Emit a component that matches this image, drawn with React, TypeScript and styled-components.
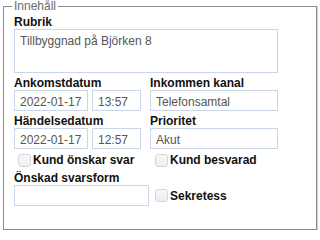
import React from 'react'
import styled, { createGlobalStyle } from 'styled-components'

const GlobalStyle = createGlobalStyle`
  html, body {
    margin: 0;
    padding: 0;
    background: #ffffff;
  }

  body {
    font-family: 'Liberation Sans', Arial, sans-serif;
  }
`

const Panel = styled.fieldset`
  margin: 0 3px;
  padding: 2px 9px 23px 10px;
  border: 1px solid #8c8c8c;
  box-shadow: 1px 1px 0 #cfcfcf;
  min-width: 0;
`

const Legend = styled.legend`
  margin-left: -2px;
  padding: 0 2px;
  font-size: 12px;
  line-height: 13px;
  color: #6b6b6b;
`

const Grid = styled.div`
  display: grid;
  grid-template-columns: 136px 128px;
  row-gap: 3px;
`

const Field = styled.div<{ $span?: boolean }>`
  display: flex;
  flex-direction: column;
  grid-column: ${(p) => (p.$span ? '1 / span 2' : 'auto')};
`

const Label = styled.label`
  display: block;
  font-size: 12px;
  font-weight: bold;
  line-height: 14px;
  color: #111111;
`

const InputRow = styled.div`
  display: flex;
  gap: 4px;
`

const TextBox = styled.input<{ $width: number }>`
  box-sizing: border-box;
  width: ${(p) => p.$width}px;
  height: 21px;
  margin: 0;
  padding: 3px 5px 0;
  border: 1px solid #c9d6ea;
  border-radius: 0;
  outline: none;
  font-family: 'Liberation Sans', Arial, sans-serif;
  font-size: 12px;
  color: #555555;
  background: #ffffff;
`

const TextArea = styled.textarea`
  box-sizing: border-box;
  width: 264px;
  height: 44px;
  margin: 0;
  padding: 4px 5px;
  border: 1px solid #c9d6ea;
  outline: none;
  resize: none;
  font-family: 'Liberation Sans', Arial, sans-serif;
  font-size: 12px;
  line-height: 14px;
  color: #555555;
`

const CheckRow = styled.label<{ $indent: number; $tall?: boolean }>`
  display: flex;
  align-items: center;
  gap: 2px;
  height: ${(p) => (p.$tall ? 21 : 16)}px;
  padding-left: ${(p) => p.$indent}px;
  align-self: end;
  font-size: 12px;
  font-weight: bold;
  color: #111111;
`

const Check = styled.input`
  appearance: none;
  box-sizing: border-box;
  width: 13px;
  height: 13px;
  margin: 0;
  border: 1px solid #d6d6d6;
  border-radius: 3px;
  background: linear-gradient(#f8f8f8, #eeeeee);
`

export default function App() {
  return (
    <>
      <GlobalStyle />
      <Panel>
        <Legend>Innehåll</Legend>
        <Grid>
          <Field $span>
            <Label>Rubrik</Label>
            <TextArea defaultValue='Tillbyggnad på Björken 8' />
          </Field>

          <Field>
            <Label>Ankomstdatum</Label>
            <InputRow>
              <TextBox $width={74} defaultValue='2022-01-17' />
              <TextBox $width={49} defaultValue='13:57' />
            </InputRow>
          </Field>
          <Field>
            <Label>Inkommen kanal</Label>
            <TextBox $width={128} defaultValue='Telefonsamtal' />
          </Field>

          <Field>
            <Label>Händelsedatum</Label>
            <InputRow>
              <TextBox $width={74} defaultValue='2022-01-17' />
              <TextBox $width={49} defaultValue='12:57' />
            </InputRow>
          </Field>
          <Field>
            <Label>Prioritet</Label>
            <TextBox $width={128} defaultValue='Akut' />
          </Field>

          <CheckRow $indent={4}>
            <Check type='checkbox' />
            Kund önskar svar
          </CheckRow>
          <CheckRow $indent={5}>
            <Check type='checkbox' />
            Kund besvarad
          </CheckRow>

          <Field>
            <Label>Önskad svarsform</Label>
            <TextBox $width={135} defaultValue='' />
          </Field>
          <CheckRow $indent={5} $tall>
            <Check type='checkbox' />
            Sekretess
          </CheckRow>
        </Grid>
      </Panel>
    </>
  )
}
